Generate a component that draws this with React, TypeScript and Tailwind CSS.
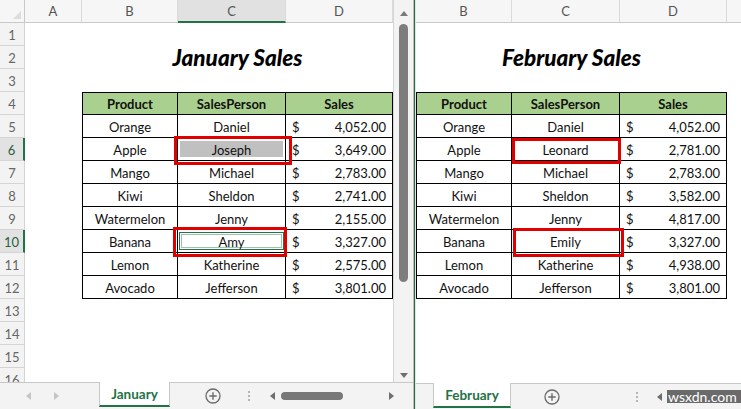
import React from "react";

type Sale = { product: string; person: string; amount: string };

const january: Sale[] = [
  { product: "Orange", person: "Daniel", amount: "4,052.00" },
  { product: "Apple", person: "Joseph", amount: "3,649.00" },
  { product: "Mango", person: "Michael", amount: "2,783.00" },
  { product: "Kiwi", person: "Sheldon", amount: "2,741.00" },
  { product: "Watermelon", person: "Jenny", amount: "2,155.00" },
  { product: "Banana", person: "Amy", amount: "3,327.00" },
  { product: "Lemon", person: "Katherine", amount: "2,575.00" },
  { product: "Avocado", person: "Jefferson", amount: "3,801.00" },
];

const february: Sale[] = [
  { product: "Orange", person: "Daniel", amount: "4,052.00" },
  { product: "Apple", person: "Leonard", amount: "2,781.00" },
  { product: "Mango", person: "Michael", amount: "2,783.00" },
  { product: "Kiwi", person: "Sheldon", amount: "3,582.00" },
  { product: "Watermelon", person: "Jenny", amount: "4,817.00" },
  { product: "Banana", person: "Emily", amount: "3,327.00" },
  { product: "Lemon", person: "Katherine", amount: "4,938.00" },
  { product: "Avocado", person: "Jefferson", amount: "3,801.00" },
];

const ROWS = Array.from({ length: 16 }, (_, i) => i + 1);

function RowHeader({ n, active }: { n: number; active?: boolean }) {
  return (
    <div
      className={
        active
          ? "flex h-[23px] w-[25px] shrink-0 items-center justify-center border-b border-r-2 border-b-[#d4d4d4] border-r-[#217346] bg-[#e2e2e2] pt-[4px] text-[13px] text-[#2b5d40]"
          : "flex h-[23px] w-[25px] shrink-0 items-center justify-center border-b border-r border-[#d4d4d4] bg-[#f3f3f3] pt-[4px] text-[13px] text-[#666666]"
      }
    >
      {n}
    </div>
  );
}

function ColHeader({ label, w, active }: { label: string; w: string; active?: boolean }) {
  return (
    <div
      className={
        (active
          ? "border-b-2 border-b-[#217346] bg-[#e1e1e1] "
          : "border-b border-b-[#c8c8c8] bg-[#f6f6f6] ") +
        "flex h-[23px] shrink-0 items-center justify-center border-r border-r-[#dadada] pt-[2px] text-[13px] text-[#555555] " +
        w
      }
    >
      {label}
    </div>
  );
}

function TableRow({
  cells,
  header,
  top,
  personCell,
}: {
  cells: [string, string, string];
  header?: boolean;
  top?: boolean;
  personCell?: "gray" | "active";
}) {
  const base =
    "flex h-[23px] shrink-0 items-center border-b border-r border-black text-[13px] text-[#111111] " +
    (top ? "border-t pt-[3px] " : "pt-[4px] ") +
    (header ? "bg-[#a9d08e] font-bold " : "");
  return (
    <>
      <div className={base + "w-[96px] justify-center border-l"}>{cells[0]}</div>
      <div className={base + "relative w-[108px] justify-center"}>
        {personCell === "gray" && (
          <div className="absolute inset-x-[1px] inset-y-[2px] border border-white bg-[#c0c0c0]" />
        )}
        {personCell === "active" && (
          <div className="absolute inset-x-[1px] inset-y-[2px] border border-[#217346] outline outline-1 outline-offset-[-3px] outline-[#9fc3ad]" />
        )}
        <span className="relative">{cells[1]}</span>
      </div>
      {header ? (
        <div className={base + "w-[107px] justify-center"}>{cells[2]}</div>
      ) : (
        <div className={base + "w-[107px] justify-between px-[6px]"}>
          <span>$</span>
          <span>{cells[2]}</span>
        </div>
      )}
    </>
  );
}

function SheetBody({
  title,
  data,
  withRowHeaders,
  highlight,
}: {
  title: string;
  data: Sale[];
  withRowHeaders: boolean;
  highlight: boolean;
}) {
  return (
    <div className="flex flex-col">
      {ROWS.map((n) => (
        <div key={n} className="flex h-[23px] shrink-0">
          {withRowHeaders && <RowHeader n={n} active={highlight && (n === 6 || n === 10)} />}
          {withRowHeaders && <div className="w-[57px] shrink-0" />}
          {n === 2 && (
            <div className="flex w-[311px] shrink-0 items-center justify-center pt-[2px] text-[22.5px] font-black italic leading-none text-black">
              {title}
            </div>
          )}
          {n === 4 && <TableRow cells={["Product", "SalesPerson", "Sales"]} header top />}
          {n >= 5 && n <= 12 && (
            <TableRow
              cells={[data[n - 5].product, data[n - 5].person, data[n - 5].amount]}
              personCell={highlight ? (n === 6 ? "gray" : n === 10 ? "active" : undefined) : undefined}
            />
          )}
        </div>
      ))}
    </div>
  );
}

function Tri({ dir, cls }: { dir: "up" | "down" | "left" | "right"; cls: string }) {
  const pts =
    dir === "up"
      ? "0,5 4,0 8,5"
      : dir === "down"
      ? "0,0 8,0 4,5"
      : dir === "left"
      ? "5,0 5,8 0,4"
      : "0,0 5,4 0,8";
  const vb = dir === "up" || dir === "down" ? "0 0 8 5" : "0 0 5 8";
  const size = dir === "up" || dir === "down" ? "h-[5px] w-[8px]" : "h-[8px] w-[5px]";
  return (
    <svg viewBox={vb} className={size + " shrink-0 " + cls}>
      <polygon points={pts} fill="currentColor" />
    </svg>
  );
}

function PlusCircle() {
  return (
    <svg viewBox="0 0 16 16" className="h-[16px] w-[16px] shrink-0 text-[#6b6b6b]">
      <circle cx="8" cy="8" r="7" fill="none" stroke="currentColor" strokeWidth="1.3" />
      <path d="M8 4.3v7.4M4.3 8h7.4" stroke="currentColor" strokeWidth="1.4" />
    </svg>
  );
}

function Dots() {
  return (
    <div className="flex w-[2px] shrink-0 flex-col gap-[2px]">
      <div className="h-[2px] w-[2px] bg-[#b5b5b5]" />
      <div className="h-[2px] w-[2px] bg-[#b5b5b5]" />
      <div className="h-[2px] w-[2px] bg-[#b5b5b5]" />
    </div>
  );
}

function LeftPane() {
  return (
    <div className="flex w-[413px] shrink-0 flex-col">
      <div className="flex h-[382px] shrink-0">
        {/* grid */}
        <div className="relative flex w-[393px] shrink-0 flex-col overflow-hidden">
          <div className="flex h-[23px] shrink-0">
            <div className="flex h-[23px] w-[25px] shrink-0 items-end justify-end border-b border-r border-[#c8c8c8] bg-[#f6f6f6] pb-[3px] pr-[3px]">
              <svg viewBox="0 0 8 8" className="h-[8px] w-[8px]">
                <polygon points="8,0 8,8 0,8" fill="#dcdcdc" />
              </svg>
            </div>
            <ColHeader label="A" w="w-[57px]" />
            <ColHeader label="B" w="w-[96px]" />
            <ColHeader label="C" w="w-[108px]" active />
            <ColHeader label="D" w="w-[107px]" />
          </div>
          <SheetBody title="January Sales" data={january} withRowHeaders highlight />
          {/* red markers */}
          <div className="absolute left-[174px] top-[136px] h-[29px] w-[118px] border-[3px] border-[#e00000]" />
          <div className="absolute left-[173px] top-[227px] h-[30px] w-[114px] border-[3px] border-[#e00000]" />
        </div>
        {/* vertical scrollbar */}
        <div className="flex w-[20px] shrink-0 flex-col items-center border-l border-[#d6d6d6] bg-[#f3f3f3]">
          <div className="mt-[11px] h-[5px]">
            <Tri dir="up" cls="text-[#7a7a7a]" />
          </div>
          <div className="mt-[8px] h-[258px] w-[9px] rounded-full bg-[#7d7d7d]" />
          <div className="mt-auto mb-[4px]">
            <Tri dir="down" cls="text-[#6e6e6e]" />
          </div>
        </div>
      </div>
      {/* sheet tabs */}
      <div className="flex h-[27px] shrink-0 items-start border-t border-[#c8c8c8] bg-[#f3f3f3]">
        <div className="flex h-[25px] w-[99px] shrink-0 items-center gap-[23px] pl-[26px]">
          <Tri dir="left" cls="text-[#c4c4c4]" />
          <Tri dir="right" cls="text-[#c4c4c4]" />
        </div>
        <div className="-mt-px flex h-[25px] w-[71px] shrink-0 items-center justify-center border-x border-b-2 border-x-[#c8c8c8] border-b-[#217346] bg-white pt-[2px] text-[13.5px] font-bold text-[#217346]">
          January
        </div>
        <div className="flex h-[25px] items-center">
          <div className="ml-[35px]">
            <PlusCircle />
          </div>
          <div className="ml-[27px]">
            <Dots />
          </div>
          <div className="ml-[20px] flex w-[124px] items-center">
            <Tri dir="left" cls="text-[#6e6e6e]" />
            <div className="ml-[6px] h-[8px] w-[62px] rounded-full bg-[#787878]" />
            <div className="ml-auto">
              <Tri dir="right" cls="text-[#6e6e6e]" />
            </div>
          </div>
        </div>
      </div>
    </div>
  );
}

function RightPane() {
  return (
    <div className="flex min-w-0 flex-1 flex-col">
      <div className="relative flex h-[383px] shrink-0 flex-col overflow-hidden">
        <div className="flex h-[23px] shrink-0">
          <ColHeader label="B" w="w-[96px]" />
          <ColHeader label="C" w="w-[108px]" />
          <ColHeader label="D" w="w-[107px]" />
          <ColHeader label="" w="w-[40px]" />
        </div>
        <SheetBody title="February Sales" data={february} withRowHeaders={false} highlight={false} />
        {/* red markers */}
        <div className="absolute left-[96px] top-[138px] h-[26px] w-[109px] border-[3px] border-[#e00000]" />
        <div className="absolute left-[97px] top-[228px] h-[29px] w-[111px] border-[3px] border-[#e00000]" />
      </div>
      <div className="flex h-[26px] shrink-0 items-start border-t border-[#c8c8c8] bg-[#f3f3f3]">
        <div className="w-[17px] shrink-0" />
        <div className="-mt-px flex h-[25px] w-[78px] shrink-0 items-center justify-center border-x border-b-2 border-x-[#c8c8c8] border-b-[#217346] bg-white pt-[2px] text-[13.5px] font-bold text-[#217346]">
          February
        </div>
        <div className="flex h-[25px] min-w-0 flex-1 items-center">
          <div className="ml-[33px]">
            <PlusCircle />
          </div>
          <div className="ml-[76px]">
            <Dots />
          </div>
          <div className="ml-[19px]">
            <Tri dir="left" cls="text-[#6e6e6e]" />
          </div>
          <div className="ml-[5px] flex h-[13px] flex-1 items-center bg-[#6a6a6a] pl-[1px] text-[14px] leading-none text-white">
            wsxdn.com
          </div>
        </div>
      </div>
    </div>
  );
}

export default function App() {
  return (
    <div className="flex h-[409px] w-[741px] overflow-hidden bg-white font-['Lato','Liberation_Sans',sans-serif]">
      <LeftPane />
      <div className="flex w-[3px] shrink-0">
        <div className="w-px bg-[#bdbdbd]" />
        <div className="w-px bg-[#217346]" />
        <div className="w-px bg-[#e4e4e4]" />
      </div>
      <RightPane />
    </div>
  );
}
